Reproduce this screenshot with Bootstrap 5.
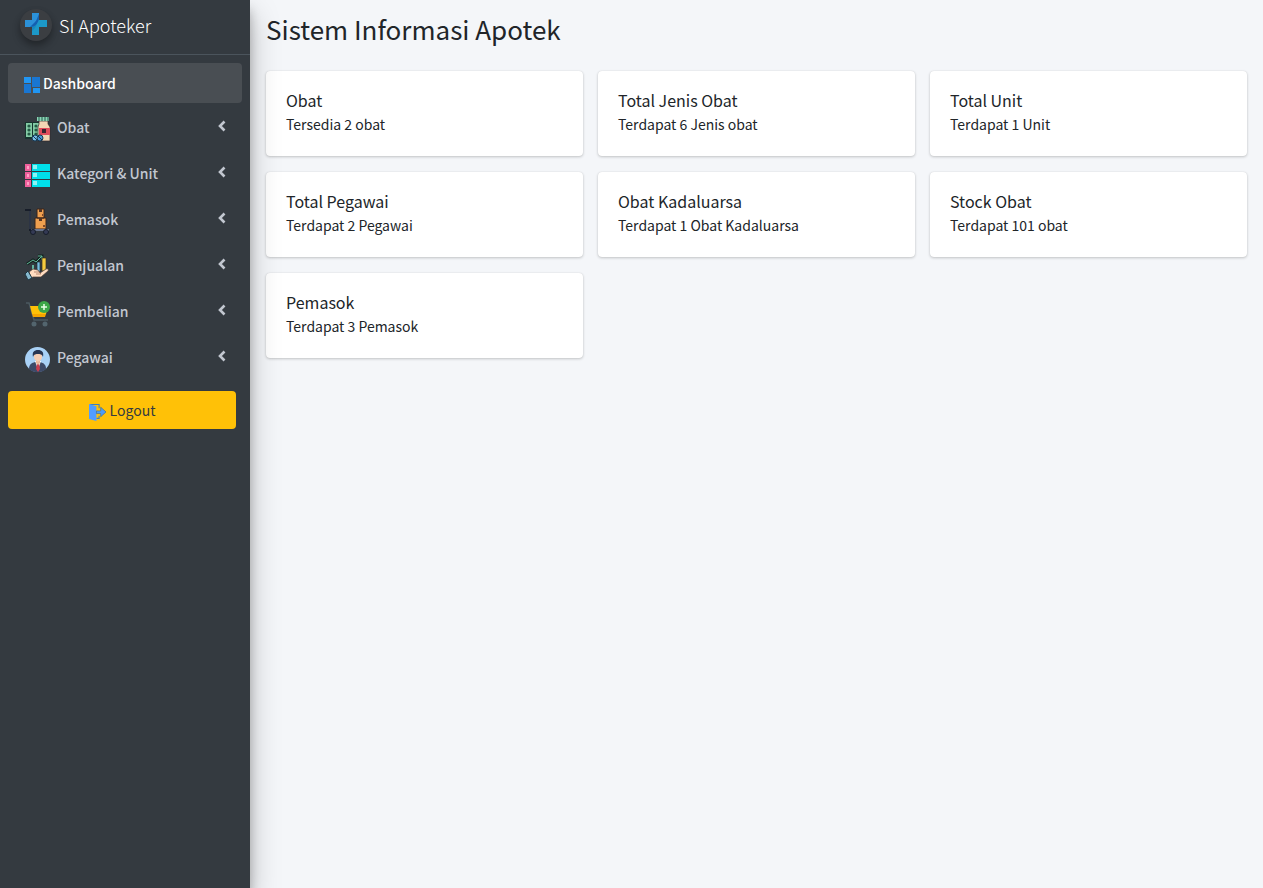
<!DOCTYPE html>
<html lang="id">
<head>
<meta charset="utf-8">
<meta name="viewport" content="width=device-width, initial-scale=1">
<title>Sistem Informasi Apotek</title>
<link href="https://cdn.jsdelivr.net/npm/bootstrap@5.3.0/dist/css/bootstrap.min.css" rel="stylesheet">
<style>
  body { background: #f4f6f9; color: #212529; font-family: "Source Sans Pro", "Noto Sans CJK JP", "Noto Sans", sans-serif; font-size: 14px; line-height: 24px; }
  .sidebar { width: 250px; background: #343a40; box-shadow: 0 14px 28px rgba(0,0,0,.25), 0 10px 10px rgba(0,0,0,.22); z-index: 2; }
  .brand { height: 55px; padding: 0 20px 4px; border-bottom: 1px solid #4b545c; color: rgba(255,255,255,.8); font-size: 18px; font-weight: 300; }
  .brand:hover { color: #fff; }
  .brand-logo { width: 32px; height: 32px; border-radius: 50%; background: #3b3e42; box-shadow: 0 3px 6px rgba(0,0,0,.16), 0 5px 9px rgba(0,0,0,.23); margin-right: 7px; }
  .side-nav { gap: 4px; padding: 8px 8px 0; }
  .side-nav .nav-link { height: 42px; padding: 0 16px 2px; border-radius: 4px; color: #c2c7d0; font-weight: 500; font-size: 14px; }
  .side-nav .nav-link.active { height: 40px; padding-bottom: 0; background: #494e53; color: #fff; }
  .side-nav .nav-link:hover { color: #fff; }
  .item-icon { width: 27px; height: 27px; margin: 4px 6px 0 0; flex: none; }
  .dash-icon { margin: 4px 3px 0 0; }
  .arrow { width: 8px; height: 12px; margin: 0 0 2px auto; }
  .logout { margin: 12px 14px 0 8px; height: 38px; padding: 0; border-radius: 4px; background: #ffc107; color: #343a40; font-size: 14px; }
  .page-title { font-size: 26px; line-height: 32px; font-weight: 400; margin: 0; padding: 13px 0 26px; }
  .stats { display: grid; grid-template-columns: repeat(3, minmax(0, 1fr)); gap: 16px 15px; }
  .stats .card { border: 0; border-radius: 4px; box-shadow: 0 0 1px rgba(0,0,0,.125), 0 1px 3px rgba(0,0,0,.2); }
  .stats .card-body { padding: 17px 20px 20px; color: #212529; }
  .stats h2 { font-size: 16px; line-height: 24px; font-weight: 400; margin: 0; }
  .stats p { margin: 0; }
</style>
</head>
<body>
<div class="d-flex min-vh-100">
  <aside class="sidebar d-flex flex-column flex-shrink-0 position-relative">
    <a href="#" class="brand d-flex align-items-center text-decoration-none">
      <svg class="brand-logo" viewBox="0 0 32 32" aria-hidden="true">
        <path d="M12 4h7v7h8v7h-8v8h-7v-8H5v-7h7z" fill="#1688bd"/>
        <path d="M12 4h7v4c0 7-3 9-9 10H5v-7h7z" fill="#2c91d8"/>
        <path d="M19 5v5c-1 5-4 8-9 8l5-5c2-2 2-4 4-8z" fill="#1460b0"/>
        <path d="M19 11h8v7h-8v8h-7v-4l3-3z" fill="#20a0cc" opacity=".7"/>
      </svg>
      <span>SI Apoteker</span>
    </a>
    <nav class="side-nav nav flex-column flex-nowrap">
      <a class="nav-link active d-flex align-items-center" aria-current="page" href="#">
        <svg width="16" height="16" viewBox="0 0 16 16" class="dash-icon" aria-hidden="true"><path fill="#2196f3" d="M0 0h7v6H0zM9 11h7v5H9z"/><path fill="#1976d2" d="M8 0h8v10H8zM0 7h7v9H0z"/></svg>
        <span>Dashboard</span>
      </a>
      <a class="nav-link d-flex align-items-center" href="#">
        <svg class="item-icon" viewBox="0 0 27 27" aria-hidden="true">
          <path d="M1 6h15v17H1z" fill="#17352e"/>
          <path d="M2 7h6v14H2zM9 7h6v14H9z" fill="#83cba5"/>
          <g fill="#245b45"><circle cx="5" cy="10" r="1.6"/><circle cx="5" cy="14" r="1.6"/><circle cx="5" cy="18" r="1.6"/><circle cx="12" cy="10" r="1.6"/><circle cx="12" cy="14" r="1.6"/><circle cx="12" cy="18" r="1.6"/></g>
          <path d="M15 5h9v3l2 3v14H14V11l1-3z" fill="#f3d6b5" stroke="#302a2b" stroke-width=".7"/>
          <path d="M13 1h12v4H13z" fill="#8bd5b5"/><path d="M15 1v4m3-4v4m3-4v4m3-4v4" stroke="#24594c"/>
          <path d="M15 12h11v7H15z" fill="#df4b5b"/><path d="M18 13h4v4h-4z" fill="#3a2530"/>
          <circle cx="11" cy="22" r="3" fill="#79bfe8" stroke="#183954"/><circle cx="16" cy="22" r="3" fill="#4a97d4" stroke="#183954"/><path d="m9 20 4 4m1-4 4 4" stroke="#183954"/>
        </svg>
        <span>Obat</span><svg class="arrow" viewBox="0 0 8 12" aria-hidden="true"><path d="M6.5 1.5 2 6l4.500 4.500" fill="none" stroke="currentColor" stroke-width="2.600"/></svg>
      </a>
      <a class="nav-link d-flex align-items-center" href="#">
        <svg class="item-icon" viewBox="0 0 27 27" aria-hidden="true">
          <path d="M1 2h6v7H1zM1 10h6v7H1zM1 18h6v7H1z" fill="#ef5f9b"/><path d="M8 2h18v7H8zM8 10h18v7H8zM8 18h18v7H8z" fill="#00dfea"/>
          <path d="M9 3h4v4H9zm0 8h4v4H9zm0 8h4v4H9z" fill="#8cf4f5"/><path d="M3 4h2v3H3zm0 8h2v3H3zm0 8h2v3H3z" fill="#ffa1c5"/>
        </svg>
        <span>Kategori &amp; Unit</span><svg class="arrow" viewBox="0 0 8 12" aria-hidden="true"><path d="M6.500 1.500 2 6l4.500 4.500" fill="none" stroke="currentColor" stroke-width="2.600"/></svg>
      </a>
      <a class="nav-link d-flex align-items-center" href="#">
        <svg class="item-icon" viewBox="0 0 27 27" aria-hidden="true">
          <path d="M1 2h5v20h19" fill="none" stroke="#171d29" stroke-width="2"/><path d="M6 3v18" stroke="#53617c" stroke-width=".7"/>
          <path d="M13 1h7v9h-7zM11 10h11v11H11z" fill="#efa04f" stroke="#38251c"/><path d="M15 1h3v3h-3zM15 10h3v3h-3z" fill="#563522"/><path d="M18 6h1v2h-1zM19 17h2v2h-2z" fill="#824b2b"/>
          <path d="M7 22h18" stroke="#68738c" stroke-width="2"/><circle cx="9" cy="24" r="2.500" fill="#343a55" stroke="#171d29"/><circle cx="22" cy="24" r="2.500" fill="#343a55" stroke="#171d29"/>
        </svg>
        <span>Pemasok</span><svg class="arrow" viewBox="0 0 8 12" aria-hidden="true"><path d="M6.500 1.500 2 6l4.500 4.500" fill="none" stroke="currentColor" stroke-width="2.600"/></svg>
      </a>
      <a class="nav-link d-flex align-items-center" href="#">
        <svg class="item-icon" viewBox="0 0 27 27" aria-hidden="true">
          <path d="m3 10 6-4 3 2 6-6M14 2h4v4" fill="none" stroke="#12241f" stroke-width="3"/><path d="m3 10 6-4 3 2 6-6M14 2h4v4" fill="none" stroke="#64b69a" stroke-width="1"/>
          <path d="M8 11h2v7H8z" fill="#62b5a0"/><path d="M13 8h3v10h-3z" fill="#75bde0" stroke="#203038" stroke-width=".7"/><path d="M18 4h4v13h-4z" fill="#f6cb3f" stroke="#39321c" stroke-width=".7"/>
          <path d="m5 18 4-3 5 1 2 3 6-4c2-1 3 1 2 2l-7 6H9l-2 1z" fill="#ffdcc0" stroke="#4a3c36" stroke-width=".7"/><path d="M10 18h5l2 2h-5" fill="none" stroke="#9b6a54" stroke-width=".7"/>
          <path d="m4 17 4 7-4 2-3-6z" fill="#86b9cf" stroke="#1d3540"/>
        </svg>
        <span>Penjualan</span><svg class="arrow" viewBox="0 0 8 12" aria-hidden="true"><path d="M6.500 1.500 2 6l4.500 4.500" fill="none" stroke="currentColor" stroke-width="2.600"/></svg>
      </a>
      <a class="nav-link d-flex align-items-center" href="#">
        <svg class="item-icon" viewBox="0 0 27 27" aria-hidden="true">
          <path d="M2 3h3l5 17h14" fill="none" stroke="#4b5960" stroke-width="1.500"/><path d="M6 6h18l-2 8H8z" fill="#ffc107"/><path d="M8 14h14l-1 3H9z" fill="#f5a400"/>
          <circle cx="10" cy="24" r="2.500" fill="#53656e"/><circle cx="21" cy="24" r="2.500" fill="#53656e"/><circle cx="20" cy="7" r="6" fill="#3da748"/><path d="M20 4v6m-3-3h6" stroke="#e7ffe5" stroke-width="1.500"/>
        </svg>
        <span>Pembelian</span><svg class="arrow" viewBox="0 0 8 12" aria-hidden="true"><path d="M6.500 1.500 2 6l4.500 4.500" fill="none" stroke="currentColor" stroke-width="2.600"/></svg>
      </a>
      <a class="nav-link d-flex align-items-center" href="#">
        <svg class="item-icon" viewBox="0 0 27 27" aria-hidden="true">
          <circle cx="13.500" cy="13.500" r="12.500" fill="#a9d1f6"/><path d="M5 23c0-5 3-6 6-7h5c4 1 6 3 6 7a12.500 12.500 0 0 1-17 0z" fill="#3d4a68"/>
          <path d="m11 15 3 9 3-9z" fill="#fff"/><path d="M13 17h2l1 6-2 3-2-3z" fill="#c93d4e"/><path d="M12 13h4v4l-2 2-2-2z" fill="#eab79b"/><ellipse cx="14" cy="10.500" rx="4" ry="5" fill="#f6cdb3"/><path d="M9 11c-1-5 1-7 5-7s6 2 5 7c-1-3-3-3-5-3s-4 0-5 3z" fill="#283653"/>
        </svg>
        <span>Pegawai</span><svg class="arrow" viewBox="0 0 8 12" aria-hidden="true"><path d="M6.500 1.500 2 6l4.500 4.500" fill="none" stroke="currentColor" stroke-width="2.600"/></svg>
      </a>
    </nav>
    <button type="button" class="btn logout d-flex align-items-center justify-content-center">
      <svg width="17" height="17" viewBox="0 0 16 16" class="me-1 mt-1" aria-hidden="true"><path d="M1 .5h8.500V4M9.500 11v2.500H7" fill="none" stroke="#397fc5"/><path d="m0 0 7 2v14l-7-2z" fill="#529dff"/><path d="M7 6.500h4V3l5 4.500-5 4.500V9H7z" fill="#4e9cf4" stroke="#35699b" stroke-width=".6"/></svg>
      <span>Logout</span>
    </button>
  </aside>
  <main class="flex-grow-1 px-3 pb-3">
    <h1 class="page-title">Sistem Informasi Apotek</h1>
    <div class="stats">
      <section class="card"><div class="card-body"><h2>Obat</h2><p>Tersedia 2 obat</p></div></section>
      <section class="card"><div class="card-body"><h2>Total Jenis Obat</h2><p>Terdapat 6 Jenis obat</p></div></section>
      <section class="card"><div class="card-body"><h2>Total Unit</h2><p>Terdapat 1 Unit</p></div></section>
      <section class="card"><div class="card-body"><h2>Total Pegawai</h2><p>Terdapat 2 Pegawai</p></div></section>
      <section class="card"><div class="card-body"><h2>Obat Kadaluarsa</h2><p>Terdapat 1 Obat Kadaluarsa</p></div></section>
      <section class="card"><div class="card-body"><h2>Stock Obat</h2><p>Terdapat 101 obat</p></div></section>
      <section class="card"><div class="card-body"><h2>Pemasok</h2><p>Terdapat 3 Pemasok</p></div></section>
    </div>
  </main>
</div>
<script src="https://cdn.jsdelivr.net/npm/bootstrap@5.3.0/dist/js/bootstrap.bundle.min.js"></script>
</body>
</html>
